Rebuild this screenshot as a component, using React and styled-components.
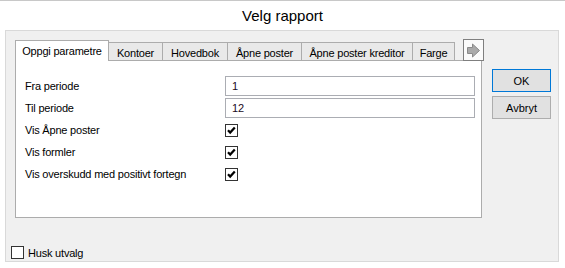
import React from "react";
import styled, { createGlobalStyle } from "styled-components";

const Global = createGlobalStyle`
  html, body { margin: 0; padding: 0; background: #ffffff; }
  body { font-family: "Liberation Sans", Arial, sans-serif; color: #000; }
  * { box-sizing: border-box; }
`;

const Window = styled.div`
  width: 565px;
  height: 268px;
  background: #ffffff;
  border-top: 1px solid #c8c8c8;
  display: flex;
  flex-direction: column;
`;

const Title = styled.div`
  height: 29px;
  padding-top: 1px;
  line-height: 28px;
  text-align: center;
  font-size: 15px;
  color: #000;
`;

const Body = styled.div`
  margin: 0 6px 0 5px;
  width: 554px;
  height: 232px;
  background: #f0f0f0;
  border: 1px solid #d9d9d9;
  display: flex;
  flex-direction: column;
  font-size: 11px;
  letter-spacing: -0.2px;
`;

const TopRow = styled.div`
  display: flex;
  padding: 8px 0 0 9px;
`;

const TabControl = styled.div`
  width: 467px;
  display: flex;
  flex-direction: column;
`;

const TabStrip = styled.div`
  height: 21px;
  display: flex;
  align-items: flex-end;
`;

const Tab = styled.div`
  flex-shrink: 0;
  width: ${(p) => p.$w + 1}px;
  margin-right: -1px;
  height: ${(p) => (p.$active ? 21 : 18)}px;
  margin-bottom: ${(p) => (p.$active ? -1 : 0)}px;
  padding-top: ${(p) => (p.$active ? 0 : 2)}px;
  background: ${(p) => (p.$active ? "#ffffff" : "#e9e9e9")};
  border: 1px solid #acacac;
  border-bottom: none;
  position: relative;
  z-index: ${(p) => (p.$active ? 2 : 1)};
  display: flex;
  align-items: center;
  justify-content: center;
  white-space: nowrap;
`;

const ArrowButton = styled.div`
  flex-shrink: 0;
  margin-left: 9px;
  width: 21px;
  height: 22px;
  margin-bottom: -1px;
  background: #fbfbfb;
  border: 1px solid #7f7f7f;
  position: relative;
  z-index: 3;
  display: flex;
  align-items: center;
  justify-content: center;
`;

const TabPage = styled.div`
  height: 158px;
  background: #ffffff;
  border: 1px solid #acacac;
  padding: 14px 0 0 9px;
`;

const Form = styled.div`
  display: grid;
  grid-template-columns: 200px 250px;
  grid-auto-rows: 22px;
  align-items: center;
`;

const Label = styled.div`
  white-space: nowrap;
`;

const TextBox = styled.input`
  width: 250px;
  height: 20px;
  border: 1px solid #abadb3;
  background: #fff;
  padding: 0 0 0 6px;
  font-family: "Liberation Sans", Arial, sans-serif;
  font-size: 11px;
  color: #1b0a22;
  outline: none;
`;

const Box = styled.span`
  width: 13px;
  height: 13px;
  border: 1px solid #333333;
  background: #ffffff;
  display: inline-flex;
  align-items: center;
  justify-content: center;
  flex-shrink: 0;
`;

const Buttons = styled.div`
  margin: 30px 0 0 10px;
  display: flex;
  flex-direction: column;
  gap: 4px;
`;

const Button = styled.div`
  width: 59px;
  height: 23px;
  background: #e1e1e1;
  border: 1px solid ${(p) => (p.$default ? "#0078d7" : "#adadad")};
  display: flex;
  align-items: center;
  justify-content: center;
  letter-spacing: 0;
`;

const BottomRow = styled.div`
  margin-top: auto;
  padding: 0 0 2px 5px;
  display: flex;
  align-items: center;
  gap: 4px;
  height: 15px;
`;

const Check = ({ checked }) => (
  <Box>
    {checked && (
      <svg width="11" height="11" viewBox="0 0 11 11">
        <path d="M2 5.2 L4.2 7.6 L8.8 2.4" fill="none" stroke="#000" strokeWidth="2.2" />
      </svg>
    )}
  </Box>
);

const tabs = [
  { label: "Oppgi parametre", w: 93, active: true },
  { label: "Kontoer", w: 54 },
  { label: "Hovedbok", w: 65 },
  { label: "Åpne poster", w: 74 },
  { label: "Åpne poster kreditor", w: 111 },
  { label: "Farge", w: 42 },
];

export default function App() {
  return (
    <>
      <Global />
      <Window>
        <Title>Velg rapport</Title>
        <Body>
          <TopRow>
            <TabControl>
              <TabStrip>
                {tabs.map((t) => (
                  <Tab key={t.label} $w={t.w} $active={t.active}>
                    {t.label}
                  </Tab>
                ))}
                <ArrowButton>
                  <svg width="19" height="20" viewBox="0 0 19 20">
                    <path
                      d="M3.5 8.5 H8.5 V5 L15.5 11.5 L8.5 18 V14.5 H3.5 Z"
                      fill="#aaaaaa"
                      stroke="#8a8a8a"
                      strokeWidth="1"
                      transform="translate(0,-1)"
                    />
                  </svg>
                </ArrowButton>
              </TabStrip>
              <TabPage>
                <Form>
                  <Label>Fra periode</Label>
                  <TextBox readOnly value="1" />
                  <Label>Til periode</Label>
                  <TextBox readOnly value="12" />
                  <Label>Vis Åpne poster</Label>
                  <Check checked />
                  <Label>Vis formler</Label>
                  <Check checked />
                  <Label>Vis overskudd med positivt fortegn</Label>
                  <Check checked />
                </Form>
              </TabPage>
            </TabControl>
            <Buttons>
              <Button $default>OK</Button>
              <Button>Avbryt</Button>
            </Buttons>
          </TopRow>
          <BottomRow>
            <Check />
            <Label>Husk utvalg</Label>
          </BottomRow>
        </Body>
      </Window>
    </>
  );
}
